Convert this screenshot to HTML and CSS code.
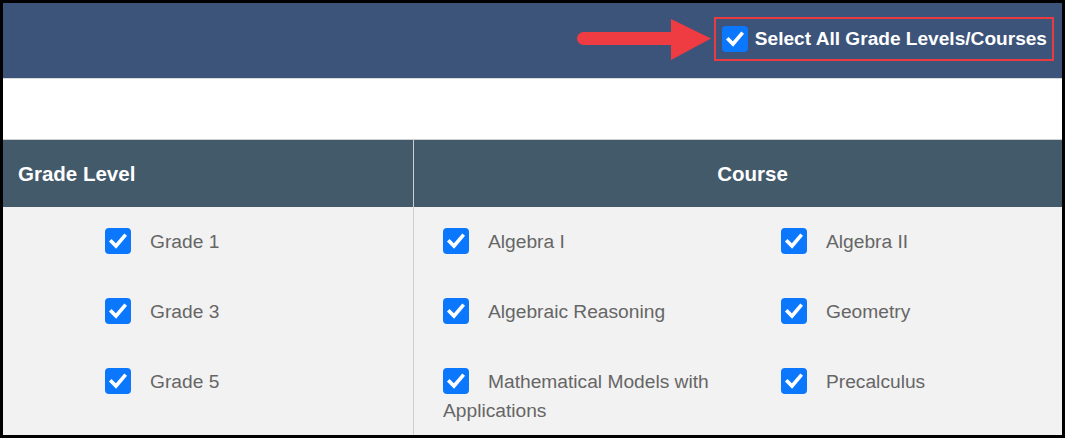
FILE: index.html
```html
<!DOCTYPE html>
<html lang="en">
<head>
    <meta charset="UTF-8">
    <title>Grade Levels and Courses</title>
    <link rel="stylesheet" href="styles.css">
</head>
<body>
    <div class="frame">
        <div class="topbar">
            <svg class="arrow" width="136" height="44" viewBox="0 0 136 44">
                <rect x="2" y="14" width="100" height="13" rx="6.5" fill="#ef3b42"/>
                <polygon points="96,1 136,20.5 96,42" fill="#ef3b42"/>
            </svg>
            <label class="select-all">
                <span class="check">
                    <svg width="26" height="26" viewBox="0 0 26 26"><polyline points="6.5,13.5 11,18 19.5,8" fill="none" stroke="#fff" stroke-width="3.6" stroke-linecap="square"/></svg>
                </span>
                Select All Grade Levels/Courses
            </label>
        </div>

        <div class="spacer"></div>

        <div class="table">
            <div class="th th-grade">Grade Level</div>
            <div class="th th-course">Course</div>

            <div class="td grades">
                <div class="item"><span class="check"><svg width="26" height="26" viewBox="0 0 26 26"><polyline points="6.5,13.5 11,18 19.5,8" fill="none" stroke="#fff" stroke-width="3.6" stroke-linecap="square"/></svg></span>Grade 1</div>
                <div class="item"><span class="check"><svg width="26" height="26" viewBox="0 0 26 26"><polyline points="6.5,13.5 11,18 19.5,8" fill="none" stroke="#fff" stroke-width="3.6" stroke-linecap="square"/></svg></span>Grade 3</div>
                <div class="item"><span class="check"><svg width="26" height="26" viewBox="0 0 26 26"><polyline points="6.5,13.5 11,18 19.5,8" fill="none" stroke="#fff" stroke-width="3.6" stroke-linecap="square"/></svg></span>Grade 5</div>
            </div>

            <div class="td courses">
                <div class="item"><span class="check"><svg width="26" height="26" viewBox="0 0 26 26"><polyline points="6.5,13.5 11,18 19.5,8" fill="none" stroke="#fff" stroke-width="3.6" stroke-linecap="square"/></svg></span>Algebra I</div>
                <div class="item"><span class="check"><svg width="26" height="26" viewBox="0 0 26 26"><polyline points="6.5,13.5 11,18 19.5,8" fill="none" stroke="#fff" stroke-width="3.6" stroke-linecap="square"/></svg></span>Algebra II</div>
                <div class="item"><span class="check"><svg width="26" height="26" viewBox="0 0 26 26"><polyline points="6.5,13.5 11,18 19.5,8" fill="none" stroke="#fff" stroke-width="3.6" stroke-linecap="square"/></svg></span>Algebraic Reasoning</div>
                <div class="item"><span class="check"><svg width="26" height="26" viewBox="0 0 26 26"><polyline points="6.5,13.5 11,18 19.5,8" fill="none" stroke="#fff" stroke-width="3.6" stroke-linecap="square"/></svg></span>Geometry</div>
                <div class="item"><span class="check"><svg width="26" height="26" viewBox="0 0 26 26"><polyline points="6.5,13.5 11,18 19.5,8" fill="none" stroke="#fff" stroke-width="3.6" stroke-linecap="square"/></svg></span>Mathematical Models with Applications</div>
                <div class="item"><span class="check"><svg width="26" height="26" viewBox="0 0 26 26"><polyline points="6.5,13.5 11,18 19.5,8" fill="none" stroke="#fff" stroke-width="3.6" stroke-linecap="square"/></svg></span>Precalculus</div>
            </div>
        </div>
    </div>
</body>
</html>
```

FILE: styles.css
```css
body {
    margin: 0;
    font-family: "Liberation Sans", Arial, sans-serif;
    background: #000;
}
.frame {
    height: 438px;
    box-sizing: border-box;
    border: 3px solid #000;
    background: #fff;
    overflow: hidden;
}
.topbar {
    height: 75px;
    background: #3c5479;
    display: flex;
    justify-content: flex-end;
    align-items: flex-start;
    padding: 14px 8px 0 0;
    box-sizing: border-box;
}
.arrow {
    margin-top: 1px;
    margin-right: 3px;
}
.select-all {
    display: flex;
    align-items: center;
    height: 40px;
    padding: 0 5px 0 6px;
    border: 2px solid #ea3b43;
    color: #fff;
    font-weight: bold;
    font-size: 19.1px;
}
.check {
    display: inline-block;
    width: 26px;
    height: 26px;
    border-radius: 4px;
    background: #0b77fc;
    vertical-align: middle;
    margin-right: 19px;
    position: relative;
    top: -2px;
}
.check svg {
    display: block;
}
.select-all .check {
    top: 0;
    margin-right: 7px;
}
.spacer {
    height: 60px;
    border-top: 1px solid #d9d9d9;
    border-bottom: 1px solid #cfcfcf;
}
.table {
    display: grid;
    grid-template-columns: 411px 1fr;
}
.th {
    height: 67px;
    background: #435a6a;
    color: #fff;
    font-weight: bold;
    font-size: 20.5px;
    display: flex;
    align-items: center;
}
.th-grade {
    padding-left: 15px;
    border-right: 1px solid #cfcfcf;
}
.th-course {
    justify-content: center;
    padding-left: 29px;
}
.td {
    background: #f2f2f2;
    height: 228px;
    box-sizing: border-box;
    padding-top: 20px;
    color: #666;
    font-size: 19.2px;
    line-height: 29px;
}
.grades {
    padding-left: 102px;
    border-right: 1px solid #cfcfcf;
    display: grid;
    align-content: start;
    row-gap: 41px;
}
.courses {
    padding-left: 29px;
    display: grid;
    grid-template-columns: 338px 280px;
    align-content: start;
    row-gap: 41px;
}
.courses .item {
    padding-right: 40px;
}
```
